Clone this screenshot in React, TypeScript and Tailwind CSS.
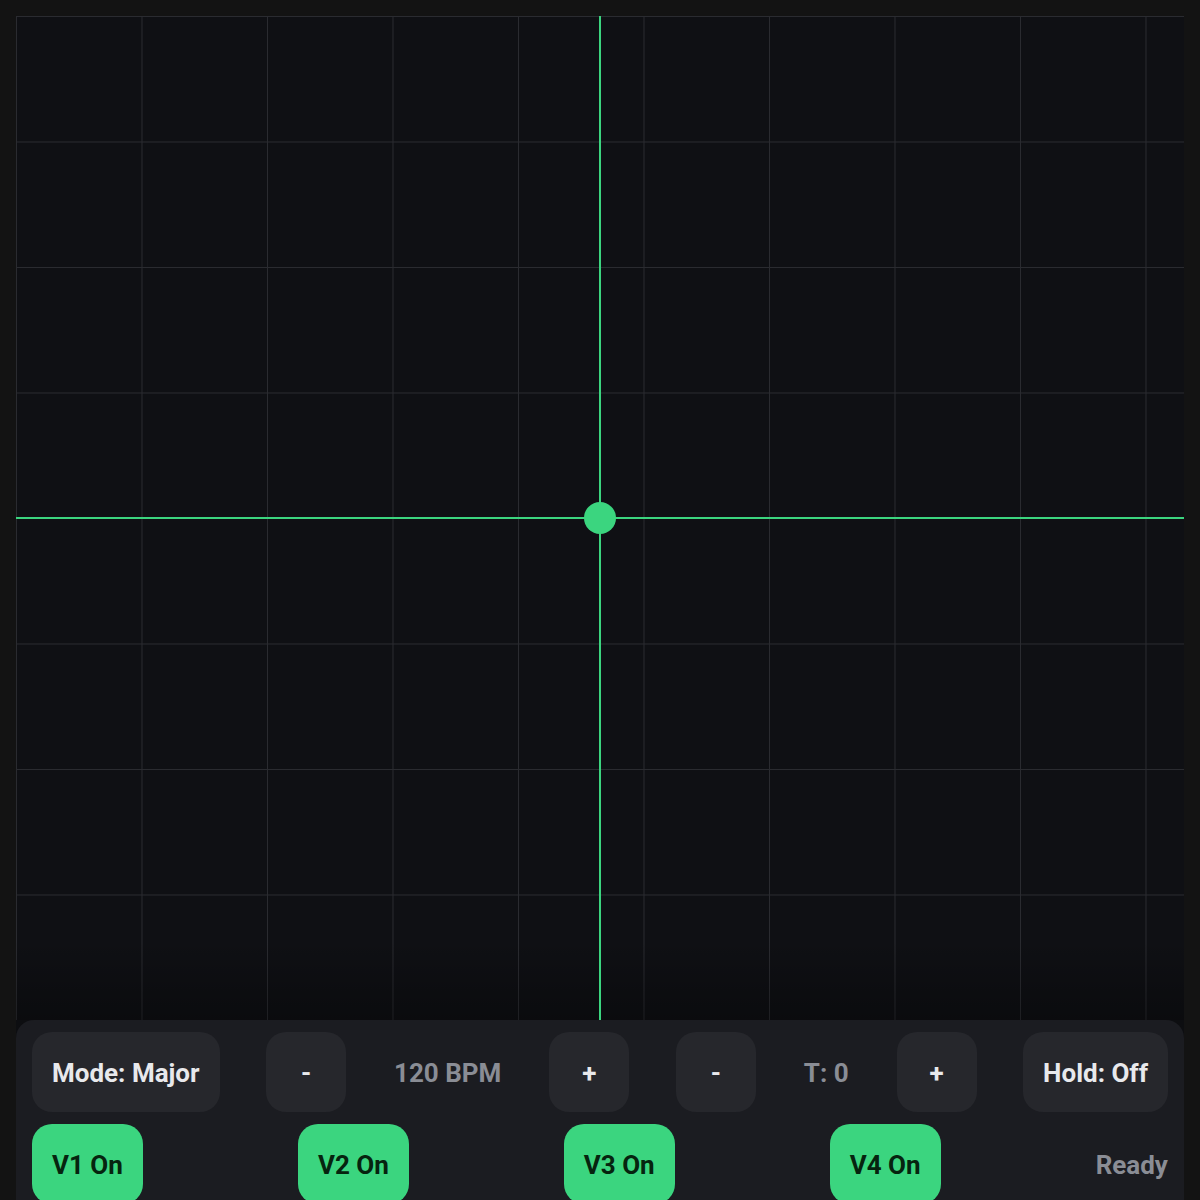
import React from "react";

const ctrl =
  "h-20 rounded-[20px] bg-[#26272c] text-[#e8e9ec] flex items-center justify-center font-bold text-[26px] pt-[2px]";
const sq = ctrl + " w-20";
const voice =
  "h-20 rounded-[20px] bg-[#3bd57f] text-[#06240f] px-5 flex items-center justify-center font-bold text-[26px] pt-[2px]";

export default function App() {
  return (
    <div className="min-h-screen bg-[#131313] p-4 font-['Roboto',sans-serif]">
      <div className="bg-[#0d0e11]">
        <div className="relative h-[1004px] overflow-hidden bg-[#0f1014] bg-[linear-gradient(to_right,#2a2b30_1px,transparent_1px),linear-gradient(to_bottom,#2a2b30_1px,transparent_1px)] bg-[size:125.5px_125.5px]">
          <div className="absolute inset-x-0 bottom-0 h-[80px] bg-gradient-to-t from-black/30 to-transparent" />
          <div className="absolute top-0 bottom-0 left-[583px] w-[2px] bg-[#3bd57f]" />
          <div className="absolute left-0 right-0 top-[501px] h-[2px] bg-[#3bd57f]" />
          <div className="absolute left-[568px] top-[486px] w-8 h-8 rounded-full bg-[#3bd57f]" />
        </div>
        <div className="rounded-t-[18px] bg-[#1b1c21] px-4 pt-3 pb-3 flex flex-col gap-3">
          <div className="flex items-center justify-between">
            <button className={ctrl + " px-5"}>Mode: Major</button>
            <div className="flex items-center gap-12">
              <button className={sq}>-</button>
              <span className="font-bold text-[26px] text-[#8a8d95] pt-[2px]">120 BPM</span>
              <button className={sq}>+</button>
            </div>
            <div className="flex items-center gap-12">
              <button className={sq}>-</button>
              <span className="font-bold text-[26px] text-[#8a8d95] pt-[2px]">T: 0</span>
              <button className={sq}>+</button>
            </div>
            <button className={ctrl + " px-5"}>Hold: Off</button>
          </div>
          <div className="flex items-center justify-between">
            <button className={voice}>V1 On</button>
            <button className={voice}>V2 On</button>
            <button className={voice}>V3 On</button>
            <button className={voice}>V4 On</button>
            <span className="font-bold text-[26px] text-[#8a8d95] pt-[2px]">Ready</span>
          </div>
        </div>
      </div>
    </div>
  );
}
